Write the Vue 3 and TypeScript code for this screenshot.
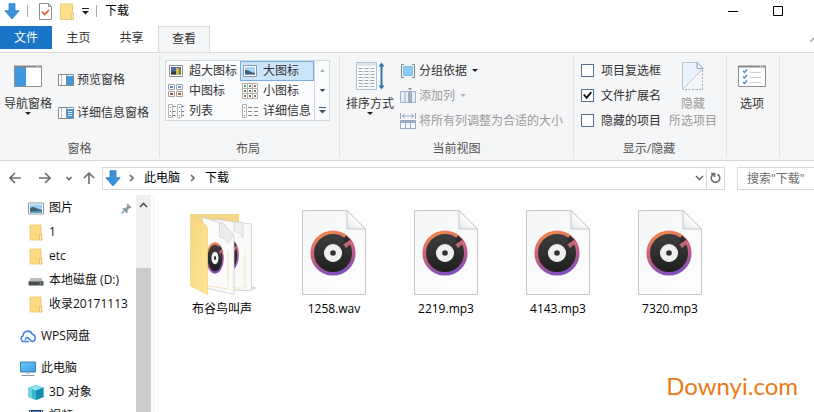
<script setup lang="ts">
import { ref } from 'vue'

interface View { id: string; label: string }
interface Toggle { label: string; on: boolean }
interface Place { icon: string; label: string; level: 0 | 1; pinned?: boolean }
interface Entry { icon: string; name: string }

const tabs = ['主页', '共享', '查看']
const activeTab = ref('查看')

const views: View[] = [
  { id: 'xlarge', label: '超大图标' },
  { id: 'large', label: '大图标' },
  { id: 'medium', label: '中图标' },
  { id: 'small', label: '小图标' },
  { id: 'list', label: '列表' },
  { id: 'details', label: '详细信息' },
]
const activeView = ref('large')

const toggles = ref<Toggle[]>([
  { label: '项目复选框', on: false },
  { label: '文件扩展名', on: true },
  { label: '隐藏的项目', on: false },
])

const places: Place[] = [
  { icon: 'picture', label: '图片', level: 1, pinned: true },
  { icon: 'folder', label: '1', level: 1 },
  { icon: 'folder', label: 'etc', level: 1 },
  { icon: 'drive', label: '本地磁盘 (D:)', level: 1 },
  { icon: 'folder', label: '收录20171113', level: 1 },
  { icon: 'cloud', label: 'WPS网盘', level: 0 },
  { icon: 'pc', label: '此电脑', level: 0 },
  { icon: 'cube', label: '3D 对象', level: 1 },
  { icon: 'video', label: '视频', level: 1 },
]

const entries: Entry[] = [
  { icon: 'album', name: '布谷鸟叫声' },
  { icon: 'audio', name: '1258.wav' },
  { icon: 'audio', name: '2219.mp3' },
  { icon: 'audio', name: '4143.mp3' },
  { icon: 'audio', name: '7320.mp3' },
]
</script>

<template>
  <div class="explorer">
    <svg class="sprite" width="0" height="0" aria-hidden="true">
      <defs>
        <linearGradient id="ring" x1="0.2" y1="0" x2="0.5" y2="1">
          <stop offset="0" stop-color="#f08a4b" /><stop offset="0.5" stop-color="#c9607a" /><stop offset="1" stop-color="#8550b8" />
        </linearGradient>
        <linearGradient id="disc" x1="0" y1="0" x2="0" y2="1">
          <stop offset="0" stop-color="#404040" /><stop offset="1" stop-color="#1d1d1d" />
        </linearGradient>
        <linearGradient id="paper" x1="0" y1="0" x2="0.6" y2="1">
          <stop offset="0" stop-color="#f5f6f7" /><stop offset="1" stop-color="#fdfdfe" />
        </linearGradient>
        <linearGradient id="fold" x1="0" y1="1" x2="1" y2="0">
          <stop offset="0" stop-color="#e3e3e3" /><stop offset="0.5" stop-color="#fff" />
        </linearGradient>
        <linearGradient id="manila" x1="0" y1="0" x2="1" y2="1">
          <stop offset="0" stop-color="#f5d67d" /><stop offset="1" stop-color="#ffe597" />
        </linearGradient>
        <linearGradient id="screen" x1="0" y1="0" x2="1" y2="1">
          <stop offset="0" stop-color="#6cc8f8" /><stop offset="1" stop-color="#3a9fe0" />
        </linearGradient>
      </defs>
      <symbol id="i-record" viewBox="0 0 46 46" preserveAspectRatio="none">
        <circle cx="23" cy="23" r="20.6" fill="url(#disc)" />
        <circle cx="23" cy="23" r="20.8" fill="none" stroke="url(#ring)" stroke-width="3.6" />
        <path d="M33 9.5l3-4 5 5-4 4z" fill="#2d2d2d" />
        <path d="M33.500 14.500l7-5 2.500 4-4 1.500-3 3z" fill="#c7677c" />
        <circle cx="23" cy="23" r="9" fill="#f1f1f1" />
        <circle cx="23" cy="23" r="2.800" fill="#303030" />
      </symbol>
      <symbol id="i-audio" viewBox="0 0 64 85">
        <path d="M.5.5H45L63.500 19V84.500H.5z" fill="url(#paper)" stroke="#c5c7c9" />
        <path d="M45 .5V19H63.500z" fill="url(#fold)" stroke="#c5c7c9" />
        <use href="#i-record" x="8" y="20" width="46" height="46" />
      </symbol>
      <symbol id="i-album" viewBox="0 0 68 85">
        <path d="M60 80l8-2-7-2z" fill="#d8d8d8" />
        <path d="M1 4H49V14H20V78z" fill="#f4d685" />
        <path d="M24 9L61.500 14V80.500L30 80z" fill="#fafafa" stroke="#cbcbcb" stroke-width=".8" />
        <path d="M44 12V22q6-1 9 6V13z" fill="#efefef" stroke="#ccc" stroke-width=".6" />
        <path d="M55 40V78H44" fill="none" stroke="#f6e7b8" />
        <use href="#i-record" x="29" y="28" width="20" height="34" />
        <path d="M12 7L33 13.500L44 25V84.500L16 78z" fill="#fbfbfb" stroke="#cbcbcb" stroke-width=".8" />
        <path d="M29.500 12.500V27q5 0 8.500 6L44 25 33 13.500z" fill="#ececec" stroke="#c8c8c8" stroke-width=".6" />
        <path d="M38 40V79L18 76" stroke="#f6e7b8" fill="none" />
        <use href="#i-record" x="16" y="32" width="18" height="32" />
        <path d="M.5 4Q13 10 17.500 18V84.500L.5 76z" fill="url(#manila)" stroke="#edcf7b" stroke-width=".6" />
      </symbol>
      <symbol id="i-down" viewBox="0 0 16 17">
        <path d="M5 .7h6v7h4.200L8 16 .8 7.700H5z" fill="#3b93dc" stroke="#2c7fc4" stroke-width=".8" />
      </symbol>
      <symbol id="i-folder" viewBox="0 0 16 17">
        <path d="M2 1h11v9h1v6H2z" fill="#fbdc82" stroke="#eac566" stroke-width=".8" />
        <path d="M11.500 16v-5.500h2V16z" fill="#ffeeb5" stroke="#dfb650" stroke-width=".7" />
      </symbol>
      <symbol id="i-picture" viewBox="0 0 16 17">
        <path d="M.5 3h15v11H.5z" fill="#fff" stroke="#8c979f" />
        <path d="M2 4.500h12v8H2z" fill="#9ccdf0" />
        <path d="M2 8q3-2 6 0l6 2v2.500H2z" fill="#3b607b" />
        <path d="M2 11.500l12-1v2H2z" fill="#4d9bb8" />
      </symbol>
      <symbol id="i-drive" viewBox="0 0 16 17">
        <path d="M3 6h10l2.500 4H.5z" fill="#b9bbbd" />
        <path d="M.5 9.500h15v4H.5z" fill="#4a4d50" />
        <path d="M11.500 11h2v1h-2z" fill="#62e38a" />
      </symbol>
      <symbol id="i-cloud" viewBox="0 0 16 17">
        <path d="M9 13.500H4A3 3 0 0 1 3 7.700 4.800 4.800 0 0 1 12.300 6.300 3.700 3.700 0 0 1 12.500 13.500C10 13.500 9.500 9.500 7 9.500a2 2 0 0 0-1.500 2.500" fill="none" stroke="#4581df" stroke-width="1.500" />
      </symbol>
      <symbol id="i-pc" viewBox="0 0 16 17">
        <path d="M.5 2h15v10H.5z" fill="url(#screen)" stroke="#3f7ea8" />
        <path d="M6 12.500h4v1.500H6z" fill="#b9c7d0" />
        <path d="M1.500 15.500h13" stroke="#8799a5" />
      </symbol>
      <symbol id="i-cube" viewBox="0 0 16 17">
        <path d="M8 1l7.500 2.500V13L8 16 .5 13V3.500z" fill="#35b7ce" />
        <path d="M8 1l7.500 2.500L8 6.500.5 3.500z" fill="#8ee3ee" />
        <path d="M8 6.500l7.500-3V13L8 16z" fill="#168fac" />
        <path d="M.5 3.500L4 4.900v9.500L.5 13z" fill="#6bd3e0" />
      </symbol>
      <symbol id="i-video" viewBox="0 0 16 17">
        <path d="M1 2h14v13H1z" fill="#27364f" />
        <path d="M4 3h8v5H4z" fill="#4784d1" /><path d="M4 9h8v5H4z" fill="#79a5db" />
        <path d="M2.500 2.500v12M13.500 2.500v12" stroke="#dce5ef" stroke-dasharray="1.500 1.500" />
      </symbol>
      <symbol id="v-xlarge" viewBox="0 0 17 16">
        <path d="M1.500 2.500h13v11h-13z" fill="#fff" stroke="#8d8d8d" />
        <path d="M3 4h10v7.500H3z" fill="#506ca8" /><path d="M3 8.500h5v3H3z" fill="#3a3a3a" />
        <path d="M8 5h3v6H8z" fill="#d8bb38" /><path d="M11 7h2v4.500h-2z" fill="#5f8738" />
      </symbol>
      <symbol id="v-large" viewBox="0 0 17 16">
        <path d="M1.500 2.500h13v11h-13z" fill="#fff" stroke="#8b98a5" />
        <path d="M3 4h10v7.500H3z" fill="#a8d3f3" /><path d="M3 7q4 0 6 2l4 1v1.500H3z" fill="#35617c" />
      </symbol>
      <symbol id="v-medium" viewBox="0 0 17 16">
        <path d="M.5 1.500h6v5h-6zM8.500 1.500h6v5h-6zM.5 8.500h6v5h-6zM8.500 8.500h6v5h-6z" fill="#fff" stroke="#a2a2a2" />
        <path d="M2 3h3v2H2z" fill="#4f8ac2" /><path d="M10 3h3v2h-3z" fill="#7196d1" />
        <path d="M2 10h3v2H2z" fill="#a04a34" /><path d="M10 10h3v2h-3z" fill="#ba582d" />
      </symbol>
      <symbol id="v-small" viewBox="0 0 17 16">
        <path d="M.5.5h15v15H.5zM5.500.5v15M10.500.5v15M.5 5.500h15M.5 10.500h15" fill="#fff" stroke="#b0b0b0" />
        <path d="M2 3h2M7 3h2M2 8h2M12 8h2M7 13h2" stroke="#5e8b5a" stroke-width="2" />
        <path d="M12 3h2M7 8h2M2 13h2M12 13h2" stroke="#a96a5b" stroke-width="2" />
      </symbol>
      <symbol id="v-list" viewBox="0 0 17 16">
        <path d="M.5 1.500h4v13h-4zM9.500 1.500h4v13h-4z" fill="#fff" stroke="#b5b5b5" />
        <path d="M2 4.500h1M2 8.500h1M2 12.500h1M11 4.500h1M11 8.500h1M11 12.500h1M5 3.500h2.500M5 8.500h2.500M5 12.500h2.500M14 3.500h2M14 8.500h2M14 12.500h2" stroke="#777" />
      </symbol>
      <symbol id="v-details" viewBox="0 0 17 16">
        <path d="M.5 1.500h4v13h-4z" fill="#fff" stroke="#b5b5b5" />
        <path d="M2 4.500h1M2 8.500h1M2 12.500h1M6 4.500h4M6 8.500h4M6 12.500h4M12 4.500h4M12 8.500h4M12 12.500h4" stroke="#888" />
      </symbol>
    </svg>

    <header class="titlebar">
      <svg class="icon-16"><use href="#i-down" /></svg>
      <span class="bar"></span>
      <button class="quick" aria-label="属性">
        <svg width="13" height="17" viewBox="0 0 13 17">
          <path d="M.5.5h9l3 3v13H.5z" fill="#fff" stroke="#8c8c8c" /><path d="M9.500.5v3h3" fill="none" stroke="#8c8c8c" />
          <path d="M3 8.500l2.500 3L10 7" fill="none" stroke="#d9532c" stroke-width="1.600" />
        </svg>
      </button>
      <button class="quick" aria-label="新建文件夹">
        <svg width="14" height="17" viewBox="0 0 14 17">
          <path d="M.5 1h12v9h1v6.500H.5z" fill="#fce08c" stroke="#efd177" /><path d="M11.500 16v-5h2v5z" fill="#fff0bb" stroke="#e2bf62" stroke-width=".7" />
        </svg>
      </button>
      <button class="quick more" aria-label="自定义">
        <svg width="7" height="7" viewBox="0 0 7 7"><path d="M0 .5h7" stroke="#222" /><path d="M0 3h7L3.500 6.500z" fill="#222" /></svg>
      </button>
      <span class="bar"></span>
      <h1 class="title">下载</h1>
      <div class="window-buttons">
        <button aria-label="最小化"><svg width="10" height="10" viewBox="0 0 10 10"><path d="M0 5.500h10" stroke="#000" /></svg></button>
        <button aria-label="最大化"><svg width="10" height="10" viewBox="0 0 10 10"><path d="M.5.5h9v9h-9z" fill="none" stroke="#000" /></svg></button>
      </div>
    </header>

    <nav class="tabs">
      <button class="tab file">文件</button>
      <button v-for="t in tabs" :key="t" class="tab" :class="{ active: t === activeTab }" @click="activeTab = t">{{ t }}</button>
      <button class="collapse" aria-label="折叠功能区"><svg width="8" height="5" viewBox="0 0 8 5"><path d="M.5 4.500L4 1l3.500 3.500" fill="none" stroke="#999" stroke-width="1.300" /></svg></button>
    </nav>

    <section class="ribbon">
      <div class="group panes">
        <div class="group-body">
          <button class="big">
            <svg width="28" height="28" viewBox="0 0 28 28"><path d="M.5 4.500h27v20H.5z" fill="#fff" stroke="#8b8f93" /><path d="M1 5h11v19H1z" fill="#3d98e0" /><path d="M0 4.500h28" stroke="#85888b" stroke-width="2" /><path d="M22 4.500h4" stroke="#ddd" stroke-dasharray="1 1" /></svg>
            <span>导航窗格</span><i class="caret"></i>
          </button>
          <div class="stack wide">
            <button class="small"><svg width="16" height="12" viewBox="0 0 16 12"><path d="M.5.5h15v11H.5z" fill="#fff" stroke="#858a8e" /><path d="M3.500 1v10" stroke="#bbb" /><path d="M9 2h6v9H9z" fill="#3d98e0" /><path d="M8.500 1v10" stroke="#858a8e" /></svg>预览窗格</button>
            <button class="small"><svg width="16" height="12" viewBox="0 0 16 12"><path d="M.5.5h15v11H.5z" fill="#fff" stroke="#858a8e" /><path d="M3.500 1v10" stroke="#bbb" /><path d="M9 2h6v9H9z" fill="#3d98e0" /><path d="M8.500 1v10" stroke="#858a8e" /><path d="M10 4.500h4M10 6.500h4M10 8.500h4" stroke="#d9edfb" /></svg>详细信息窗格</button>
          </div>
        </div>
        <h2>窗格</h2>
      </div>

      <div class="group layout">
        <div class="group-body">
          <div class="gallery">
            <div class="views">
              <button v-for="v in views" :key="v.id" class="view" :class="{ selected: v.id === activeView }" @click="activeView = v.id">
                <svg class="view-icon"><use :href="'#v-' + v.id" /></svg><span>{{ v.label }}</span>
              </button>
            </div>
            <div class="gallery-scroll">
              <button aria-label="上一行"><svg width="7" height="5" viewBox="0 0 7 5"><path d="M1 4h5L3.500 1z" fill="#a9adb1" /></svg></button>
              <button aria-label="下一行"><svg width="7" height="5" viewBox="0 0 7 5"><path d="M.5 1h6L3.500 4z" fill="#44546a" /></svg></button>
              <button aria-label="更多"><svg width="7" height="7" viewBox="0 0 7 7"><path d="M0 .5h7" stroke="#44546a" /><path d="M0 3h7L3.500 6.500z" fill="#44546a" /></svg></button>
            </div>
          </div>
        </div>
        <h2>布局</h2>
      </div>

      <div class="group current">
        <div class="group-body">
          <button class="big">
            <svg width="28" height="28" viewBox="0 0 28 28">
              <path d="M.5.5h20v27H.5z" fill="#fbfcfd" stroke="#b4c0ca" /><path d="M1 1h19v3H1z" fill="#d6e7f1" /><path d="M7.500 1v26M13.500 1v26" stroke="#e2eaef" />
              <path d="M2.500 6.500h16M2.500 9.500h16M2.500 12.500h16M2.500 15.500h16M2.500 18.500h16M2.500 21.500h16M2.500 24.500h16" stroke="#9aa5ad" stroke-dasharray="4 2" />
              <path d="M25.500 2v24" stroke="#2c78b5" stroke-width="2" /><path d="M22.500 4.500l3-4 3 4zM22.500 23.500l3 4 3-4z" fill="#2c78b5" />
            </svg>
            <span>排序方式</span><i class="caret"></i>
          </button>
          <div class="stack">
            <button class="small"><svg width="16" height="14" viewBox="0 0 16 14"><path d="M4 .5H1.500v13H4M12 .5h2.500v13H12" fill="none" stroke="#7b8790" /><path d="M3.500 2.500h9v9h-9z" fill="#8dccf7" stroke="#7cc0ee" /></svg>分组依据<i class="caret"></i></button>
            <button class="small" disabled><svg width="16" height="15" viewBox="0 0 16 15"><path d="M.5 3.500h15v11H.5zM5 3.500v11" fill="#e8eef6" stroke="#9fb0ca" /><path d="M8.500 3.500h3v11h-3z" fill="#a4b0c5" stroke="#9aa8bf" /><path d="M8 0h4l-2 2.500z" fill="#8490a8" /></svg>添加列<i class="caret"></i></button>
            <button class="small" disabled><svg width="16" height="16" viewBox="0 0 16 16"><path d="M.5 0v6M15.500 0v6M2 3h12M4.500 1L2 3l2.500 2M11.500 1L14 3l-2.500 2" fill="none" stroke="#98a8c1" /><path d="M.5 7.500h15v8H.5z" fill="#f3f6fa" stroke="#98a8c1" /><path d="M0 8h16v2H0z" fill="#98a8c1" /><path d="M5.500 8v7M10.500 8v7" stroke="#98a8c1" /></svg>将所有列调整为合适的大小</button>
          </div>
        </div>
        <h2>当前视图</h2>
      </div>

      <div class="group visibility">
        <div class="group-body">
          <div class="stack">
            <label v-for="t in toggles" :key="t.label" class="check"><input v-model="t.on" type="checkbox" />{{ t.label }}</label>
          </div>
          <button class="big" disabled>
            <svg width="22" height="28" viewBox="0 0 22 28"><path d="M.5.5H15l6 6L.5 27.500z" fill="#eaf2fa" stroke="#b4c4da" /><path d="M15 .5v6h6z" fill="#fff" stroke="#8ba1c0" /><path d="M20.500 8v19.500H1" fill="none" stroke="#a3a9b2" stroke-dasharray="2 1.500" /></svg>
            <span>隐藏</span><span>所选项目</span>
          </button>
        </div>
        <h2>显示/隐藏</h2>
      </div>

      <div class="group options">
        <div class="group-body">
          <button class="big">
            <svg width="28" height="28" viewBox="0 0 28 28"><path d="M.5 4.500h27v20H.5z" fill="#fff" stroke="#8b8f93" /><path d="M0 4.500h28" stroke="#85888b" stroke-width="2" /><path d="M22 4.500h4" stroke="#ddd" stroke-dasharray="1 1" /><path d="M5 9l1.500 1.500L9 7.500M5 14.500L6.500 16 9 13M5 20l1.500 1.500L9 18.500" fill="none" stroke="#4a90cc" stroke-width="1.500" /><path d="M12 10.500h11M12 15.500h11M12 20.500h11" stroke="#cfd2d4" /></svg>
            <span>选项</span>
          </button>
        </div>
      </div>
    </section>

    <div class="location">
      <button aria-label="后退"><svg width="12" height="12" viewBox="0 0 12 12"><path d="M12 6H1M6 1L1 6l5 5" /></svg></button>
      <button aria-label="前进"><svg width="12" height="12" viewBox="0 0 12 12"><path d="M0 6h11M6 1l5 5-5 5" /></svg></button>
      <button class="recent" aria-label="最近浏览的位置"><svg width="6" height="5" viewBox="0 0 6 5"><path d="M.5 1L3 3.500 5.500 1" /></svg></button>
      <button class="up" aria-label="上移"><svg width="12" height="12" viewBox="0 0 12 12"><path d="M6 12V1M1 6l5-5 5 5" /></svg></button>
      <div class="address">
        <svg class="icon-16"><use href="#i-down" /></svg>
        <svg class="sep" width="5" height="8" viewBox="0 0 5 8"><path d="M1 1l3 3-3 3" /></svg>
        <a href="#">此电脑</a>
        <svg class="sep" width="5" height="8" viewBox="0 0 5 8"><path d="M1 1l3 3-3 3" /></svg>
        <a href="#">下载</a>
        <button class="history" aria-label="以前的位置"><svg width="9" height="6" viewBox="0 0 9 6"><path d="M1 1l3.500 3.500L8 1" /></svg></button>
        <button class="refresh" aria-label="刷新"><svg width="11" height="12" viewBox="0 0 11 12"><path d="M3.500 2.300A4.300 4.300 0 1 0 7.500 2.300M1 1.500h3.500V5" /></svg></button>
      </div>
      <input class="search" type="search" aria-label="搜索" placeholder='搜索"下载"' />
    </div>

    <div class="main">
      <aside class="sidebar">
        <ul class="places">
          <li v-for="p in places" :key="p.label" class="place" :class="{ child: p.level === 1, root: p.level === 0 }">
            <svg class="icon-16"><use :href="'#i-' + p.icon" /></svg>
            <span>{{ p.label }}</span>
            <svg v-if="p.pinned" class="pin" width="11" height="11" viewBox="0 0 11 11"><path d="M6.500.5l4 4-1 .8-1-.2-2 2.200.2 2-1 1L1.500 6l1-1 2 .2L6.300 3l-.5-1z" fill="#8799a5" /><path d="M3.500 7.500L.5 10.500" stroke="#8799a5" stroke-width="1.200" /></svg>
          </li>
        </ul>
        <div class="scrollbar">
          <button aria-label="向上滚动"><svg width="9" height="6" viewBox="0 0 9 6"><path d="M1 5l3.500-3.500L8 5" fill="none" stroke="#505050" stroke-width="1.700" /></svg></button>
          <div class="thumb"></div>
        </div>
      </aside>
      <main class="files">
        <figure v-for="e in entries" :key="e.name" class="entry">
          <svg class="entry-icon" :class="e.icon"><use :href="'#i-' + e.icon" /></svg>
          <figcaption>{{ e.name }}</figcaption>
        </figure>
      </main>
      <div class="watermark">Downyi.com</div>
    </div>
  </div>
</template>

<style>
body { margin: 0; background: #fff; }
</style>

<style scoped>
.explorer {
  display: flex;
  flex-direction: column;
  height: 100vh;
  overflow: hidden;
  font: 12px/16px "Open Sans", "Noto Sans CJK SC", sans-serif;
  color: #111;
}
.explorer * { box-sizing: border-box; }
.sprite { display: block; flex: none; }
svg { flex: none; }
button {
  display: flex;
  align-items: center;
  justify-content: center;
  padding: 0;
  border: 0;
  background: none;
  font: inherit;
  color: inherit;
  white-space: nowrap;
}
.icon-16 { width: 16px; height: 17px; }

.titlebar { display: flex; align-items: center; flex: none; height: 22px; padding-left: 4px; margin-bottom: 4px; }
.bar { width: 1px; height: 12px; margin-left: 7px; background: #aaa; }
.quick { margin-left: 8px; }
.quick:first-of-type { margin-left: 11px; }
.title { margin: 0 0 0 8px; font: inherit; color: #000; }
.window-buttons { display: flex; margin-left: auto; margin-right: 14px; }
.window-buttons button { width: 45px; height: 20px; }

.tabs { display: flex; flex: none; height: 27px; }
.tab { width: 53px; height: 23px; padding-top: 1px; color: #333; }
.tab.file { width: 52px; background: #1a75c7; color: #fff; }
.tab.active { height: 27px; width: 52px; padding-bottom: 3px; border: 1px solid #dadbdc; border-bottom: 0; background: #f5f6f7; }
.collapse { align-self: flex-start; margin: 11px -4px 0 auto; }

.ribbon { display: flex; flex: none; height: 109px; padding-bottom: 2px; background: #f5f6f7; border-top: 1px solid #dadbdc; border-bottom: 1px solid #d5d6d7; margin-top: -1px; color: #333; }
.group { display: flex; flex-direction: column; flex: none; border-right: 1px solid #e0e2e4; margin-top: 2px; }
.group-body { display: flex; height: 86px; padding-top: 5px; }
.group h2 { margin: 0; font: inherit; text-align: center; color: #555; }
.big { flex-direction: column; justify-content: flex-start; height: 72px; padding-top: 2px; }
.big svg { margin-bottom: 5px; }
.big span { line-height: 17px; }
.caret { border: 3px solid transparent; border-top-color: #222; border-bottom: 0; }
.stack { display: flex; flex-direction: column; padding-top: 2px; gap: 8px; }
.small { justify-content: flex-start; height: 17px; gap: 3px; }
.stack.wide { padding-top: 11px; gap: 16px; }
.small .caret { margin-left: 2px; }
button:disabled { color: #9b9b9b; }
button:disabled .caret { border-top-color: #b5b5b5; }

.panes { width: 160px; padding-left: 4px; }
.panes .stack { margin-left: 6px; }
.panes h2 { padding-right: 4px; }
.layout { width: 180px; padding-left: 5px; }
.layout h2 { padding-right: 8px; }
.current { width: 234px; }
.current .big { margin-left: 6px; }
.current .stack { margin-left: 6px; }
.visibility { width: 153px; }
.visibility .stack { margin-left: 7px; }
.visibility .big { margin-left: 8px; }
.visibility h2 { padding-right: 2px; }
.options { width: 53px; }
.options .big { width: 50px; }

.gallery { display: flex; height: 61px; border: 1px solid #d5d8db; background: #fafbfc; }
.views { display: grid; grid-template-columns: 74px 74px; grid-auto-rows: 20px; }
.view { justify-content: flex-start; gap: 4px; padding-left: 2px; }
.view.selected { border: 1px solid #78aee0; background: #cce4fb; padding-left: 1px; }
.view-icon { width: 17px; height: 16px; }
.gallery-scroll { display: flex; flex-direction: column; width: 15px; border-left: 1px solid #d5d8db; }
.gallery-scroll button { flex: 1; }

.check { display: flex; align-items: center; height: 17px; gap: 7px; white-space: nowrap; }
.check input { display: grid; place-items: center; appearance: none; width: 13px; height: 13px; margin: 0; border: 1px solid #56708c; background: #fff; }
.check input:checked::before { content: ""; width: 9px; height: 9px; background: #111; clip-path: polygon(0 45%, 18% 32%, 40% 58%, 85% 5%, 100% 20%, 42% 92%); }

.location { display: flex; align-items: center; flex: none; height: 34px; padding-left: 9px; }
.location path { fill: none; stroke: #6d6d6d; stroke-width: 1.600; }
.location > button { margin-right: 18px; }
.location > button.recent { margin: 0 11px 0 -3px; }
.location > button.up { margin-right: 7px; }
.address { display: flex; align-items: center; flex: 1; height: 23px; padding-left: 2px; border: 1px solid #d9d9d9; }
.address a { color: #000; text-decoration: none; white-space: nowrap; }
.sep { margin: 0 10px 0 8px; }
.address a + .sep { margin-left: 10px; }
.history { margin-left: auto; margin-right: 2px; }
.refresh { width: 18px; height: 21px; border-left: 1px solid #d9d9d9; }
.search { width: 90px; height: 23px; margin: 0 -13px 0 12px; padding: 0 9px; border: 1px solid #d9d9d9; border-radius: 0; font: inherit; outline: 0; }
.search::placeholder { color: #6d6d6d; opacity: 1; }

.main { position: relative; display: flex; flex: 1; min-height: 0; }
.sidebar { display: flex; flex: none; width: 154px; border-right: 1px solid #f0f0f0; overflow: hidden; }
.places { flex: 1; margin: 0; padding: 1px 0 0; list-style: none; }
.place { display: flex; align-items: center; height: 24px; gap: 5px; padding-left: 20px; white-space: nowrap; }
.place.child { padding-left: 28px; }
.place.root { margin-top: 8px; }
.pin { margin: 0 4px 0 auto; }
.scrollbar { width: 15px; margin-right: 2px; background: #f0f0f0; }
.scrollbar button { width: 15px; height: 20px; }
.thumb { height: 100%; margin-top: 53px; background: #cdcdcd; }

.files { display: flex; flex-wrap: wrap; align-content: flex-start; flex: 1; padding: 15px 0 0 12px; }
.entry { display: flex; flex-direction: column; align-items: center; width: 112px; margin: 0; }
.entry-icon { width: 64px; height: 85px; margin-bottom: 6px; }
.entry-icon.album { width: 68px; margin-left: 4px; }
.entry figcaption { color: #000; }

.watermark { position: absolute; right: 16px; bottom: 10px; font: 24px/32px Lato, "Open Sans", sans-serif; color: #ea7a17; }
</style>
